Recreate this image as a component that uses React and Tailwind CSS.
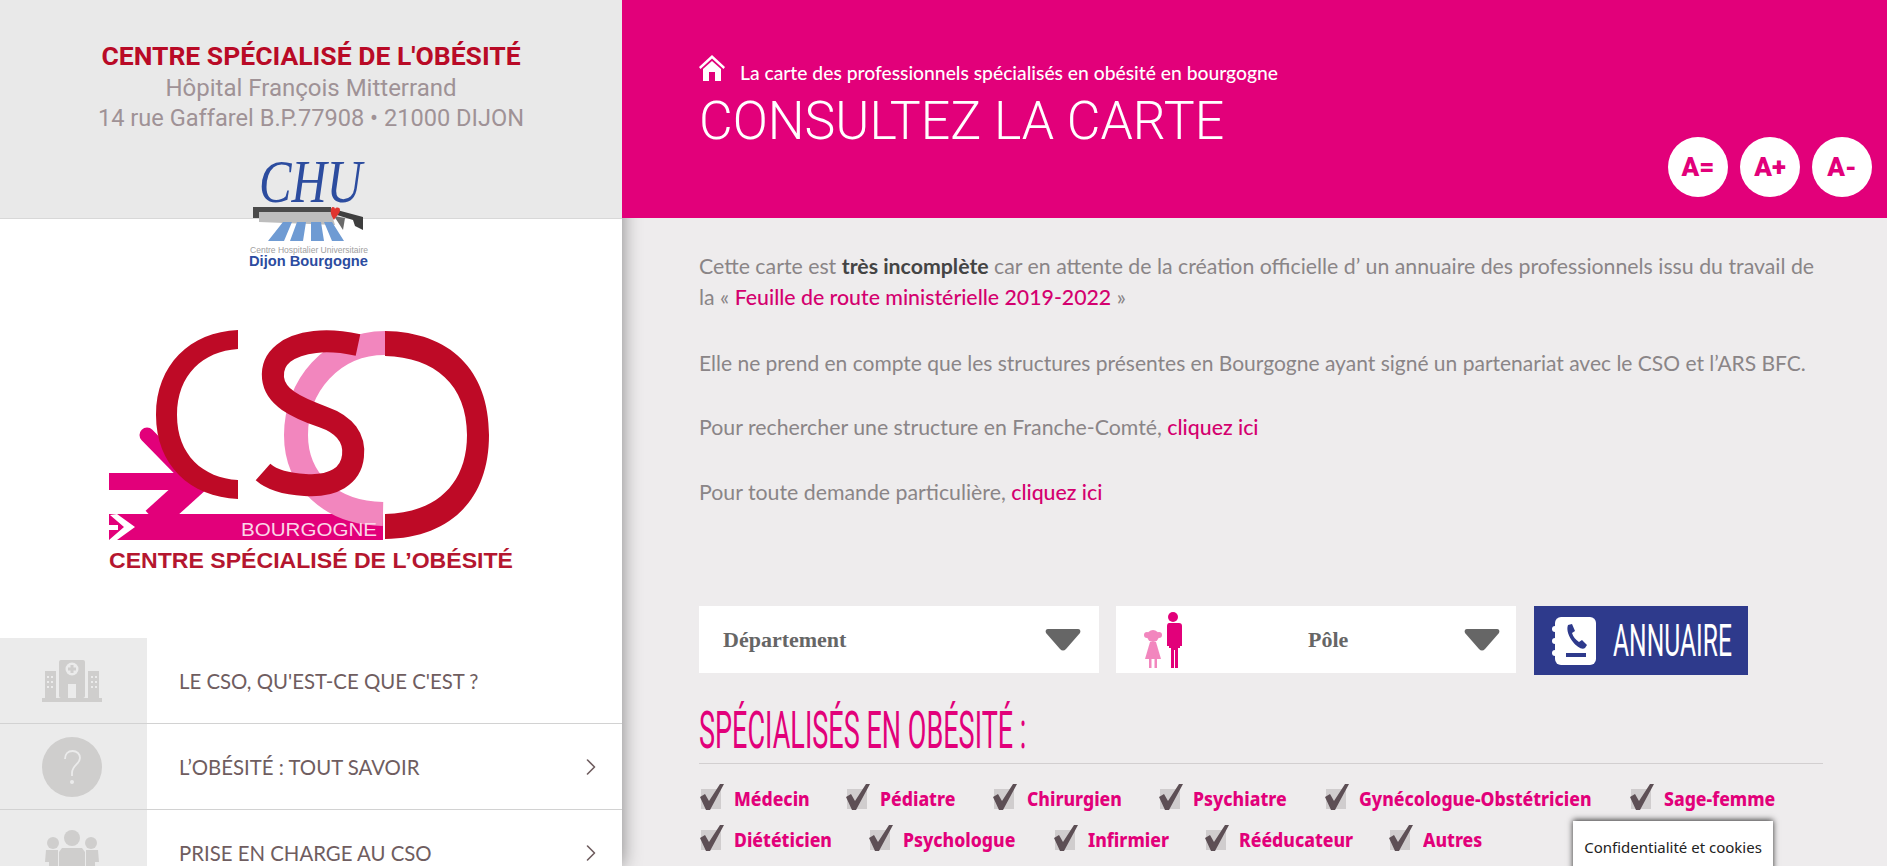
import React from "react";
import { ChevronRight } from "lucide-react";

const row1 = [
  { label: "Médecin", w: "w-[146px]" },
  { label: "Pédiatre", w: "w-[147px]" },
  { label: "Chirurgien", w: "w-[166px]" },
  { label: "Psychiatre", w: "w-[166px]" },
  { label: "Gynécologue-Obstétricien", w: "w-[305px]" },
  { label: "Sage-femme", w: "w-[150px]" },
];
const row2 = [
  { label: "Diététicien", w: "w-[169px]" },
  { label: "Psychologue", w: "w-[185px]" },
  { label: "Infirmier", w: "w-[151px]" },
  { label: "Rééducateur", w: "w-[184px]" },
  { label: "Autres", w: "w-[120px]" },
];

const HospitalIcon = () => (
  <svg width="60" height="42" viewBox="0 0 60 42" fill="#cfcecd">
    <path d="M0 38h60v4H0z" />
    <path d="M3 11h11v27H3zM46 11h11v27H46z" />
    <rect x="17" y="0" width="26" height="38" rx="2" />
    <circle cx="30" cy="9" r="6.500" fill="#ebebeb" />
    <path d="M28.500 5h3v2.500H34v3h-2.500V13h-3v-2.500H26v-3h2.500z" />
    <rect x="26" y="24" width="8" height="14" fill="#ebebeb" />
    <path
      fill="#ebebeb"
      d="M5 16h2v2H5zM9 16h2v2H9zM5 21h2v2H5zM9 21h2v2H9zM5 26h2v2H5zM9 26h2v2H9zM49 16h2v2h-2zM53 16h2v2h-2zM49 21h2v2h-2zM53 21h2v2h-2zM49 26h2v2h-2zM53 26h2v2h-2z"
    />
  </svg>
);

const QuestionIcon = () => (
  <svg width="60" height="60" viewBox="0 0 60 60">
    <circle cx="30" cy="30" r="30" fill="#cfcecd" />
    <path
      d="M23 22c0-5 3-8 7.500-8s7.500 3 7.500 7c0 6-8 7-8 15v3"
      fill="none"
      stroke="#ebebeb"
      strokeWidth="1.800"
    />
    <circle cx="30" cy="45" r="2" fill="#ebebeb" />
  </svg>
);

const PeopleIcon = () => (
  <svg width="58" height="46" viewBox="0 0 58 46" fill="#cfcecd">
    <circle cx="29" cy="8" r="8" />
    <circle cx="10" cy="13" r="6" />
    <circle cx="48" cy="13" r="6" />
    <path d="M19 18h20l3 4v24H16V22z" />
    <path d="M3 20h12v26H6V32H2zM43 20h12l1 12h-4v14h-9z" />
  </svg>
);

const ChuLogo = () => (
  <svg width="124" height="118" viewBox="0 0 124 118" className="overflow-visible">
    <text x="10" y="46" fontSize="62" fontStyle="italic" fill="#2c4c9f" textLength="103" lengthAdjust="spacingAndGlyphs" fontFamily="'Liberation Serif', serif">
      CHU
    </text>
    <path d="M4 51h78v5H4z" fill="#4a4a4a" />
    <path d="M4 56h6v6H4z" fill="#4a4a4a" />
    <path d="M10 56h72l4 13-76-3z" fill="#bdbdbd" />
    <path d="M88 54l26 7v13l-8-4-2-6-16-5z" fill="#3e3e3e" />
    <path d="M96 62l-2 12-9-14z" fill="#6a6a6a" />
    <path d="M82 53c1-3 4-2 4 0 1-2 5-2 5 1 0 4-4 6-6 10-2-3-4-7-3-11z" fill="#e0352f" />
    <path d="M19 85l15-19h9l-8 19zM41 85l7-19h9l-3 19zM62 85v-19h10l3 19zM83 85l-8-19h8l12 19z" fill="#6f9bd3" />
    <text x="1" y="97" fontSize="9.500" fill="#a0a0a0" textLength="118" lengthAdjust="spacingAndGlyphs" fontFamily="'Liberation Sans', sans-serif">
      Centre Hospitalier Universitaire
    </text>
    <text x="0" y="110" fontSize="15" fontWeight="700" fill="#2c4c9f" textLength="119" lengthAdjust="spacingAndGlyphs" fontFamily="'Liberation Sans', sans-serif">
      Dijon Bourgogne
    </text>
  </svg>
);

const CsoLogo = () => (
  <svg width="460" height="280" viewBox="0 0 460 280" className="block">
    <path d="M29 163h85v17H29z" fill="#e2007a" />
    <path d="M67 125l46 47" stroke="#e2007a" strokeWidth="15" strokeLinecap="round" fill="none" />
    <path d="M116 172L74 210" stroke="#e2007a" strokeWidth="25" fill="none" />
    <path d="M29 204h274v26H29z" fill="#e2007a" />
    <path d="M29 215h9v5h-9zM30 205l7-1 18 13-18 13h-8l15-13z" fill="#fff" />
    <path d="M305 33C252 33 216 76 216 125c0 45 34 78 87 79" stroke="#f286be" strokeWidth="24" fill="none" />
    <path d="M158 20C110 22 76 55 76 105s34 82 82 84v-19c-35-2-61-25-61-65s26-64 61-66z" fill="#be0a26" />
    <path d="M278 35c-14-3-28-5-43-3-26 3-44 15-42 36 2 19 22 29 50 39 23 8 32 22 30 39-2 20-20 31-48 29-17-1-33-5-42-13" stroke="#be0a26" strokeWidth="22" fill="none" />
    <path d="M305 21c65 1 104 39 104 104s-39 103-104 104v-25c50-1 82-29 82-79s-32-78-82-79z" fill="#be0a26" />
    <text x="161" y="226" fontSize="19" fill="#fbd5e8" textLength="136" lengthAdjust="spacingAndGlyphs" fontFamily="'Liberation Sans', sans-serif">
      BOURGOGNE
    </text>
    <text x="29" y="258" fontSize="22" fontWeight="700" fill="#b5162f" textLength="404" lengthAdjust="spacingAndGlyphs" fontFamily="'Liberation Sans', sans-serif">
      CENTRE SPÉCIALISÉ DE L’OBÉSITÉ
    </text>
  </svg>
);

const Figures = () => (
  <svg width="40" height="56" viewBox="0 0 40 56">
    <g fill="#f286be">
      <circle cx="9" cy="24" r="6" />
      <circle cx="3" cy="23" r="3" />
      <circle cx="15" cy="23" r="3" />
      <path d="M6 30h6l5 17H1z" />
      <path d="M5 47h2.500v9H5zM10.500 47H13v9h-2.500z" />
    </g>
    <g fill="#e2007a">
      <circle cx="29" cy="5" r="5" />
      <path d="M23 11h12c2 0 3 1 3 3v20h-2v2h-2v20h-3V38h-1v18h-3V36h-2v-2h-2V14c0-2 1-3 2-3z" />
    </g>
  </svg>
);

const Triangle = () => (
  <svg width="36" height="23" viewBox="0 0 36 23">
    <path d="M3 1h30c2 0 3 2 2 4L21 21c-2 2-4 2-6 0L1 5C0 3 1 1 3 1z" fill="#666" />
  </svg>
);

const Check = ({ label, w }) => (
  <label className={`flex items-center ${w} h-10`}>
    <span className="relative w-[35px] h-5 shrink-0">
      <span className="absolute left-[2px] top-0 w-[20px] h-5 bg-[#d0cdce]" />
      <svg width="26" height="28" viewBox="0 0 26 28" className="absolute left-0 top-[-6px]">
        <path d="M1 14l5-3 4 7L21 1h4L11 27H7z" fill="#5d4f55" />
      </svg>
    </span>
    <span className="font-['Noto_Sans',sans-serif] font-extrabold text-[20px] text-[#e2007a] whitespace-nowrap inline-block origin-left scale-x-[0.88]">
      {label}
    </span>
  </label>
);

const MenuRow = ({ icon, label, arrow, last }) => (
  <div className={`flex h-[86px] ${last ? "" : "border-b border-[#d2d2d2]"}`}>
    <div className="w-[147px] shrink-0 bg-[#ebebeb] flex items-center justify-center pr-[3px]">{icon}</div>
    <div className="flex-1 flex items-center justify-between pl-[32px] pr-[17px]">
      <span className="text-[21px] text-[#6f5d5f] font-['Lato',sans-serif] inline-block origin-left whitespace-nowrap scale-x-[0.97]">
        {label}
      </span>
      {arrow && <ChevronRight size={28} strokeWidth={1.4} className="text-[#6f5d5f]" />}
    </div>
  </div>
);

export default function App() {
  return (
    <div className="relative flex w-full h-[866px] overflow-hidden bg-[#eeeced] font-['Lato',sans-serif]">
      {/* sidebar */}
      <aside className="relative z-10 w-[622px] shrink-0 bg-white shadow-[0_0_18px_rgba(0,0,0,0.45)]">
        <div className="h-[219px] bg-[#e9e9e9] border-b border-[#d8d8d8] pt-[38px] text-center font-['Roboto',sans-serif]">
          <h1 className="text-[26.500px] leading-[35px] font-bold text-[#b90a26]">CENTRE SPÉCIALISÉ DE L'OBÉSITÉ</h1>
          <p className="text-[24px] leading-[30px] text-[#9f9296]">Hôpital François Mitterrand</p>
          <p className="text-[23.600px] leading-[30px] text-[#9f9296]">14 rue Gaffarel B.P.77908 • 21000 DIJON</p>
        </div>
        <div className="absolute left-[249px] top-[156px]">
          <ChuLogo />
        </div>
        <div className="h-[419px] pl-[80px] pt-[91px]">
          <CsoLogo />
        </div>
        <MenuRow icon={<HospitalIcon />} label="LE CSO, QU'EST-CE QUE C'EST ?" />
        <MenuRow icon={<QuestionIcon />} label="L’OBÉSITÉ : TOUT SAVOIR" arrow />
        <MenuRow icon={<PeopleIcon />} label="PRISE EN CHARGE AU CSO" arrow last />
      </aside>

      {/* main */}
      <main className="flex-1 min-w-0">
        <header className="relative z-20 h-[218px] bg-[#e2007a] flex justify-between pl-[77px] pr-[15px]">
          <div className="pt-[55px] text-white">
            <div className="flex items-end gap-[15px]">
              <svg width="26" height="26" viewBox="0 0 26 26" className="mb-[7px]" fill="#fff">
                <path d="M13 0L0 12l1.500 2L13 3.500 24.500 14l1.500-2z" />
                <path d="M4 14l9-8 9 8v12h-6v-9h-6v9H4z" />
              </svg>
              <span className="text-[19.300px] leading-[30px] font-medium">La carte des professionnels spécialisés en obésité en bourgogne</span>
            </div>
            <h2 className="text-[54px] leading-[66px] font-['Roboto',sans-serif] font-light whitespace-nowrap origin-left scale-x-[0.96]">CONSULTEZ LA CARTE</h2>
          </div>
          <div className="flex items-end gap-3 pb-[21px]">
            {["A=", "A+", "A-"].map((t) => (
              <button key={t} className="w-[60px] h-[60px] rounded-full bg-white text-[#e2007a] text-[26px] font-black font-['Roboto',sans-serif]">
                {t}
              </button>
            ))}
          </div>
        </header>

        <div className="pl-[77px] pr-[64px] pt-[33px]">
          <div className="text-[21.300px] leading-[31px] text-[#8a8587] space-y-[34px]">
            <p>
              Cette carte est <strong className="text-[#444]">très incomplète</strong> car en attente de la création officielle d’ un annuaire des professionnels issu du travail de la « <a className="text-[#d4006f] font-medium">Feuille de route ministérielle 2019-2022</a> »
            </p>
            <p className="text-[21px]">Elle ne prend en compte que les structures présentes en Bourgogne ayant signé un partenariat avec le CSO et l’ARS BFC.</p>
            <p>
              Pour rechercher une structure en Franche-Comté, <a className="text-[#d4006f] font-medium">cliquez ici</a>
            </p>
            <p>
              Pour toute demande particulière, <a className="text-[#d4006f] font-medium">cliquez ici</a>
            </p>
          </div>

          <div className="flex items-start gap-[17px] mt-[98px]">
            <div className="w-[400px] h-[67px] bg-white flex items-center justify-between pl-6 pr-[18px] font-['Liberation_Serif',serif] font-bold text-[22px] text-[#666]">
              <span>Département</span>
              <Triangle />
            </div>
            <div className="w-[400px] h-[67px] bg-white flex items-center pl-[28px] pr-4 font-['Liberation_Serif',serif] font-bold text-[22px] text-[#666]">
              <Figures />
              <span className="ml-[124px] flex-1">Pôle</span>
              <Triangle />
            </div>
            <button className="w-[214px] h-[69px] ml-[1px] bg-[#2e3a8c] flex items-center pl-[18px] text-white">
              <svg width="44" height="48" viewBox="0 0 44 48" className="shrink-0">
                <rect x="3" y="0" width="41" height="48" rx="6" fill="#fff" />
                <circle cx="3" cy="12" r="3" fill="#fff" />
                <circle cx="3" cy="24" r="3" fill="#fff" />
                <circle cx="3" cy="36" r="3" fill="#fff" />
                <path d="M16 8l4-1 3 7-3 2c1 4 4 7 7 9l3-2 5 5-2 3c-3 2-8-1-12-6-4-5-7-12-5-17z" fill="#2e3a8c" />
                <path d="M14 36h20v4H14z" fill="#2e3a8c" />
              </svg>
              <span className="ml-[17px] text-[44px] leading-none font-['Roboto',sans-serif] font-normal whitespace-nowrap inline-block origin-left scale-x-[0.56]">ANNUAIRE</span>
            </button>
          </div>

          <h3 className="mt-[29px] text-[#e2007a] text-[52px] leading-[54px] font-normal font-['Roboto',sans-serif] whitespace-nowrap origin-left scale-x-[0.52]">SPÉCIALISÉS EN OBÉSITÉ :</h3>
          <div className="mt-[5px] border-t border-[#d2cfd0]" />

          <div className="flex mt-[15px] mb-[1px]">
            {row1.map((c) => (
              <Check key={c.label} {...c} />
            ))}
          </div>
          <div className="flex">
            {row2.map((c) => (
              <Check key={c.label} {...c} />
            ))}
          </div>
        </div>
      </main>

      {/* cookie tab */}
      <div className="absolute left-[1573px] top-[821px] w-[200px] h-[60px] bg-white shadow-[0_-1px_6px_rgba(0,0,0,0.8)] pt-[15px] text-center text-[15px] text-[#222] font-['Noto_Sans',sans-serif]">
        Confidentialité et cookies
      </div>
    </div>
  );
}
